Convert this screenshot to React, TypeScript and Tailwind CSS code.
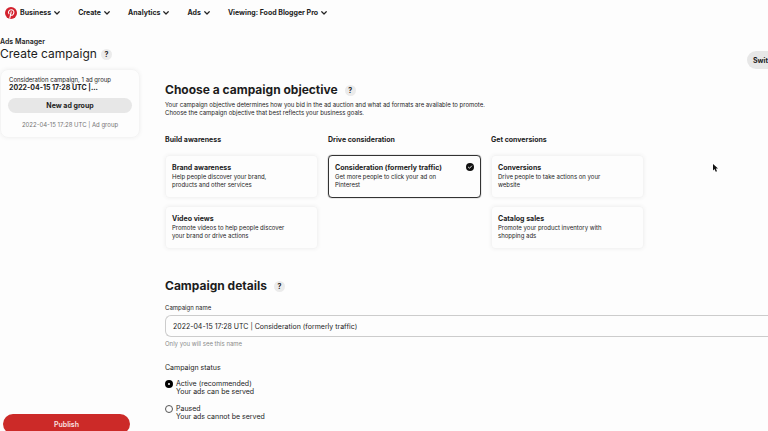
import { useState } from 'react'
import clsx from 'clsx'

const NAV = ['Business', 'Create', 'Analytics', 'Ads', 'Viewing: Food Blogger Pro']

const OBJECTIVES = [
  {
    group: 'Build awareness',
    items: [
      { title: 'Brand awareness', text: 'Help people discover your brand, products and other services' },
      { title: 'Video views', text: 'Promote videos to help people discover your brand or drive actions' },
    ],
  },
  {
    group: 'Drive consideration',
    items: [{ title: 'Consideration (formerly traffic)', text: 'Get more people to click your ad on Pinterest' }],
  },
  {
    group: 'Get conversions',
    items: [
      { title: 'Conversions', text: 'Drive people to take actions on your website' },
      { title: 'Catalog sales', text: 'Promote your product inventory with shopping ads' },
    ],
  },
]

const STATUSES = [
  { id: 'active', label: 'Active (recommended)', hint: 'Your ads can be served' },
  { id: 'paused', label: 'Paused', hint: 'Your ads cannot be served' },
]

function Logo() {
  return (
    <svg viewBox="0 0 24 24" className="size-3 shrink-0" aria-hidden="true">
      <circle cx="12" cy="12" r="12" fill="#d3222e" />
      <path
        d="M9.6 22.4 12.4 9.8M7.9 13.6C5.6 10.2 7.6 5.6 12.4 5.6c4 0 6 2.9 5.2 6.2-.8 3.8-3.2 5.2-5.1 4.7-1.1-.3-1.7-1.1-1.6-2"
        fill="none"
        stroke="#fff"
        strokeWidth="2.2"
        strokeLinecap="round"
      />
    </svg>
  )
}

function Chevron() {
  return (
    <svg viewBox="0 0 12 8" className="h-1 w-1.5" aria-hidden="true">
      <path d="M1.5 1.5 6 6l4.5-4.5" fill="none" stroke="#222" strokeWidth="2.4" strokeLinecap="round" strokeLinejoin="round" />
    </svg>
  )
}

function Help() {
  return (
    <button
      type="button"
      className="flex size-[11px] items-center justify-center rounded-full bg-[#ebebeb] text-[7px] leading-none font-bold"
    >
      ?
    </button>
  )
}

function Check() {
  return (
    <svg viewBox="0 0 16 16" className="size-2 shrink-0" aria-hidden="true">
      <circle cx="8" cy="8" r="8" fill="#111" />
      <path d="m4.8 8.4 2.2 2.1 4.2-4.5" fill="none" stroke="#fff" strokeWidth="1.8" strokeLinecap="round" strokeLinejoin="round" />
    </svg>
  )
}

export default function App() {
  const [objective, setObjective] = useState('Consideration (formerly traffic)')
  const [status, setStatus] = useState('active')
  const [name, setName] = useState('2022-04-15 17:28 UTC | Consideration (formerly traffic)')

  return (
    <div className="relative flex h-screen flex-col overflow-hidden bg-[#fdfdfd] font-['Inter',sans-serif] text-[#1c1c1c]">
      <nav className="flex h-[25px] shrink-0 items-center gap-[18px] pl-[5px] text-[7px] leading-none font-bold">
        {NAV.map((item, i) => (
          <button key={item} type="button" className="flex items-center gap-[3px] font-bold">
            {i === 0 && <Logo />}
            {item}
            <Chevron />
          </button>
        ))}
      </nav>

      <div className="flex min-h-0 flex-1">
        {/* Sidebar */}
        <aside className="flex w-[140px] shrink-0 flex-col pt-[13px]">
          <p className="text-[7px] leading-2 font-semibold">Ads Manager</p>
          <div className="flex items-center gap-1">
            <h1 className="text-[12px] leading-4">Create campaign</h1>
            <Help />
          </div>

          <section className="mt-[7px] rounded-lg border border-[#f4f4f4] px-[7px] pt-[6px] pb-2 shadow-[0_0_4px_rgba(0,0,0,0.06)]">
            <p className="pl-px text-[6px] leading-2">Consideration campaign, 1 ad group</p>
            <p className="pl-px text-[7px] leading-2 font-bold">2022-04-15 17:28 UTC |...</p>
            <button type="button" className="mt-[6px] block h-[15px] w-full rounded-full bg-[#e7e7e7] text-[7px] leading-none font-bold">
              New ad group
            </button>
            <p className="mt-2 text-center text-[6px] leading-2 text-[#767676]">2022-04-15 17:28 UTC | Ad group</p>
          </section>

          <button
            type="button"
            className="mx-[3px] mt-auto -mb-[3px] h-5 w-[127px] shrink-0 rounded-full bg-[#cc2a28] text-[7px] leading-none font-semibold text-[#fbe4e4]"
          >
            Publish
          </button>
        </aside>

        {/* Campaign form */}
        <main className="min-w-0 flex-1 pl-[25px]">
          <div className="mt-[26px] flex justify-end">
            <button type="button" className="h-[18px] rounded-l-full bg-[#e7e7e7] pl-[6px] text-[7px] leading-none font-bold">
              Swit
            </button>
          </div>

          <section className="mt-[13px]">
            <div className="flex items-center gap-[7px]">
              <h2 className="text-[12px] leading-4 font-bold">Choose a campaign objective</h2>
              <Help />
            </div>
            <p className="mt-[3px] text-[6px] leading-2">
              Your campaign objective determines how you bid in the ad auction and what ad formats are available to promote.
              <br />
              Choose the campaign objective that best reflects your business goals.
            </p>

            <div className="mt-[19px] grid grid-cols-[repeat(3,153px)] gap-x-[10px]">
              {OBJECTIVES.map((column) => (
                <div key={column.group} className="flex flex-col gap-2">
                  <h3 className="mb-[3px] text-[7px] leading-2 font-bold">{column.group}</h3>
                  {column.items.map((item) => (
                    <button
                      key={item.title}
                      type="button"
                      aria-pressed={objective === item.title}
                      onClick={() => setObjective(item.title)}
                      className={clsx(
                        'flex h-[43px] items-start justify-between rounded border px-[6px] pt-[7px] text-left',
                        objective === item.title
                          ? 'border-[#333] shadow-[0_0_1px_#333]'
                          : 'border-[#f4f4f4] shadow-[0_0_4px_rgba(0,0,0,0.06)]',
                      )}
                    >
                      <span className="w-[118px]">
                        <span className="block text-[7px] leading-[10px] font-bold whitespace-nowrap">{item.title}</span>
                        <span className="block text-[6px] leading-2">{item.text}</span>
                      </span>
                      {objective === item.title && <Check />}
                    </button>
                  ))}
                </div>
              ))}
            </div>
          </section>

          <section className="mt-[29px]">
            <div className="flex items-center gap-[7px]">
              <h2 className="text-[12px] leading-4 font-bold">Campaign details</h2>
              <Help />
            </div>

            <label htmlFor="campaign-name" className="mt-[10px] block text-[6px] leading-2">
              Campaign name
            </label>
            <input
              id="campaign-name"
              type="text"
              value={name}
              onChange={(e) => setName(e.target.value)}
              className="mt-[3px] block h-[22px] w-full rounded-l-md border border-r-0 border-[#ccc] px-[7px] text-[7px] outline-none"
            />
            <p className="mt-[3px] text-[6px] leading-2 text-[#8a8a8a]">Only you will see this name</p>

            <fieldset className="mt-4">
              <legend className="text-[7px] leading-2">Campaign status</legend>
              <div className="mt-2 flex flex-col gap-[9px]">
                {STATUSES.map((s) => (
                  <label key={s.id} className="flex items-start gap-[3px] text-[7px] leading-2">
                    <input
                      type="radio"
                      name="status"
                      value={s.id}
                      checked={status === s.id}
                      onChange={() => setStatus(s.id)}
                      className="size-2 shrink-0 appearance-none rounded-full border border-[#555] checked:border-3 checked:border-black"
                    />
                    <span>
                      {s.label}
                      <span className="block">{s.hint}</span>
                    </span>
                  </label>
                ))}
              </div>
            </fieldset>
          </section>
        </main>
      </div>

      {/* Pointer */}
      <svg viewBox="0 0 10 16" className="absolute top-[164px] left-[713px] h-2 w-[5px]" aria-hidden="true">
        <path d="M0 0v13l3-3 2.5 5.5 2.5-1L5.6 9H10z" fill="#111" />
      </svg>
    </div>
  )
}
